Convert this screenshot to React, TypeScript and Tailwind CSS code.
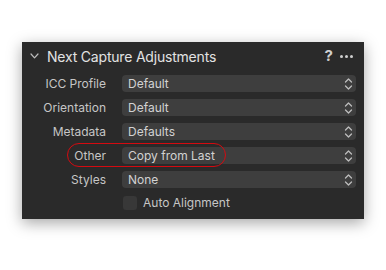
import React from "react";

const rows = [
  { label: "ICC Profile", value: "Default" },
  { label: "Orientation", value: "Default" },
  { label: "Metadata", value: "Defaults" },
  { label: "Other", value: "Copy from Last", marked: true },
  { label: "Styles", value: "None" },
];

function UpDown() {
  return (
    <svg width="9" height="14" viewBox="0 0 9 14" fill="none" stroke="#bdbdbd" strokeWidth="1.3" strokeLinecap="round" strokeLinejoin="round">
      <path d="M1.5 5 L4.5 2 L7.5 5" />
      <path d="M1.5 9 L4.5 12 L7.5 9" />
    </svg>
  );
}

export default function App() {
  return (
    <div className="w-[386px] h-[270px] bg-white overflow-hidden" style={{ fontFamily: "Inter, 'Noto Sans', sans-serif" }}>
      <div className="ml-[22px] mt-[42px] w-[342px] h-[177px] bg-[#2a2a2a] shadow-[0_4px_14px_rgba(0,0,0,0.35)]">
        <div className="h-[28px] flex items-center pl-[8px] pr-[11px]">
          <svg width="9" height="6" viewBox="0 0 9 6" fill="none" stroke="#bdbdbd" strokeWidth="1.2" strokeLinecap="round" strokeLinejoin="round">
            <path d="M1 1 L4.5 4.8 L8 1" />
          </svg>
          <span className="ml-[8px] text-[14px] text-[#e2e2e2] tracking-[-0.2px]">Next Capture Adjustments</span>
          <span className="ml-auto text-[15px] font-bold text-[#cfcfcf]">?</span>
          <span className="ml-[7px] flex gap-[2px] items-center">
            <span className="w-[3px] h-[3px] rounded-full bg-[#cfcfcf]" />
            <span className="w-[3px] h-[3px] rounded-full bg-[#cfcfcf]" />
            <span className="w-[3px] h-[3px] rounded-full bg-[#cfcfcf]" />
          </span>
        </div>
        <div className="pt-[5px] flex flex-col gap-[7px]">
          {rows.map((r) => (
            <div key={r.label} className="relative h-[17px] flex items-center">
              <span className="w-[84px] text-right text-[12px] text-[#c6c6c6]">{r.label}</span>
              <div className="ml-[16px] w-[234px] h-[17px] rounded-[4px] bg-[#3e3e3e] flex items-center pl-[6px] pr-[3px]">
                <span className="text-[12px] text-[#d2d2d2]">{r.value}</span>
                <span className="ml-auto flex"><UpDown /></span>
              </div>
              {r.marked && (
                <div className="absolute left-[45px] top-[-4px] w-[159px] h-[24px] rounded-full border-[1.5px] border-[#d40a10]" />
              )}
            </div>
          ))}
          <div className="h-[14px] flex items-center mt-[1px]">
            <span className="ml-[101px] w-[14px] h-[14px] rounded-[3px] bg-[#383838]" />
            <span className="ml-[6px] text-[12px] text-[#c6c6c6]">Auto Alignment</span>
          </div>
        </div>
      </div>
    </div>
  );
}
